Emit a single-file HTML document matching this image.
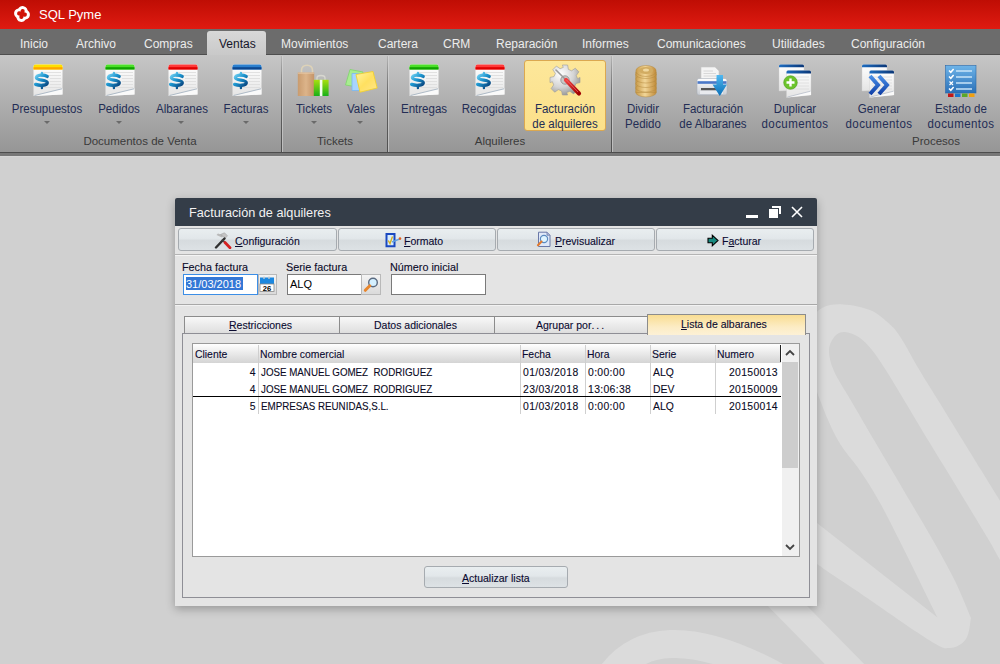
<!DOCTYPE html>
<html><head><meta charset="utf-8">
<style>
*{box-sizing:border-box}
html,body{margin:0;padding:0}
body{width:1000px;height:664px;position:relative;overflow:hidden;background:#d0d0d0;font-family:"Liberation Sans",sans-serif}
.a{position:absolute}
.t{position:absolute;white-space:pre;line-height:1}
#title{left:0;top:0;width:1000px;height:29px;background:linear-gradient(#bf0d04,#df1b11)}
#tabs{left:0;top:29px;width:1000px;height:26px;background:#6c6c6c;border-bottom:1px solid #4e4e4e}
.tab{font-size:12px;color:#ececec;top:38px}
#ribbon{left:0;top:55px;width:1000px;height:97px;background:linear-gradient(#c6c6c6,#969696)}
.rl{font-size:12px;color:#232d55;text-align:center;transform:scaleX(.96);transform-origin:50% 0}
.gl{font-size:11.5px;color:#3a3a3a;text-align:center}
.sep{width:2px;top:56px;height:96px;background:linear-gradient(90deg,transparent 0,transparent 0) ,linear-gradient(rgba(90,90,90,.15),rgba(90,90,90,.85) 40%,#505050);background-size:1px 100%;background-repeat:no-repeat;border-right:1px solid rgba(215,215,215,.6)}
.arr{width:0;height:0;border-left:3px solid transparent;border-right:3px solid transparent;border-top:3px solid #6a6a6a}
#dlg{left:175px;top:198px;width:642px;height:408px;background:#e4e4e4;box-shadow:0 3px 10px rgba(0,0,0,.28);border-radius:2px 2px 0 0}
.btn{position:absolute;height:23px;border:1px solid #a6abb0;border-radius:3px;background:linear-gradient(#e9eef0 0%,#e2e7ea 45%,#d6dbde 55%,#dde2e5 100%)}
.bt{font-size:10.5px;color:#0a0a30;-webkit-text-stroke:.1px #0a0a30}
.lbl{font-size:10.8px;color:#0a0a28;-webkit-text-stroke:.1px #0a0a28}
.inp{position:absolute;background:#fff;border:1px solid #7a7a7a}
.tb{position:absolute;height:17px;border:1px solid #8c8c8c;border-bottom:none;background:linear-gradient(#f8f8f8,#dedede)}
.gh{font-size:10.4px;color:#0a0a30;-webkit-text-stroke:.1px #0a0a30;top:350px}
.gc{font-size:10.4px;color:#0a0a24;-webkit-text-stroke:.1px #0a0a24}
.gd{letter-spacing:.35px}
.gn{transform:scaleX(.94);transform-origin:0 0}
.vl{position:absolute;width:1px;background:#cfcfcf}
</style></head><body>
<!-- watermark -->
<svg class="a" style="left:0;top:0" width="1000" height="664">
<path fill="#dbdbdb" d="M1031.5 552.0 C1023.1 538.3 992.5 488.7 981.0 470.0 C969.5 451.3 969.7 451.7 962.5 440.0 C955.3 428.3 945.1 411.7 937.9 400.0 C930.7 388.3 925.5 380.3 919.4 370.0 C913.2 359.7 906.1 345.7 901.0 338.0 C895.9 330.3 894.2 328.3 889.0 323.6 C883.8 318.9 877.7 313.2 870.0 310.0 C862.3 306.8 851.0 304.7 843.0 304.4 C835.0 304.1 827.5 304.6 822.0 308.0 C816.5 311.4 812.3 316.3 810.0 325.0 C807.7 333.7 806.3 347.5 808.0 360.0 C809.7 372.5 815.0 386.7 820.0 400.0 C825.0 413.3 831.2 428.3 837.8 440.0 C844.4 451.7 852.8 460.0 859.6 470.0 C866.4 480.0 871.8 488.3 878.4 500.0 C885.0 511.7 889.4 520.4 899.2 540.0 C909.1 559.6 931.1 604.7 937.5 617.6 L817.0 523.0 L770.0 486.0 L770.0 528.0 C777.8 534.0 802.8 553.7 817.0 564.0 C831.2 574.3 836.8 577.3 855.5 590.0 C874.2 602.7 913.2 630.3 929.0 640.0 C944.8 649.7 943.8 648.2 950.0 648.0 C956.2 647.8 962.5 644.0 966.0 639.0 C969.5 634.0 970.2 621.5 971.0 618.0 C968.3 611.8 961.4 594.0 955.0 581.0 C948.6 568.0 940.4 553.5 932.8 540.0 C925.2 526.5 916.1 511.7 909.3 500.0 C902.4 488.3 897.6 480.0 891.7 470.0 C885.8 460.0 880.9 451.7 874.0 440.0 C867.1 428.3 857.3 411.5 850.6 400.0 C843.9 388.5 837.6 379.3 834.0 371.0 C830.4 362.7 828.8 355.8 829.0 350.0 C829.2 344.2 832.4 339.0 835.0 336.0 C837.6 333.0 840.7 331.8 844.6 332.0 C848.5 332.2 854.0 334.0 858.6 337.0 C863.2 340.0 867.5 344.5 872.0 350.0 C876.5 355.5 880.5 361.7 885.8 370.0 C891.1 378.3 897.0 388.3 904.0 400.0 C911.0 411.7 920.9 428.3 928.0 440.0 C935.1 451.7 940.3 460.0 946.4 470.0 C952.5 480.0 957.5 488.3 964.6 500.0 C971.7 511.7 982.9 530.0 988.8 540.0 C994.7 550.0 996.5 554.0 1000.0 560.0 C1003.5 566.0 1008.3 573.3 1010.0 576.0 Z"/>
<g fill="none" stroke="#dbdbdb" stroke-width="28">
<path d="M600 694C628 634 690 620 810 696"/>
<path d="M760 578L870 690"/>
</g>
</svg>

<!-- title bar -->
<div id="title" class="a"></div>
<svg class="a" style="left:12px;top:4px" width="20" height="20" viewBox="-10 -10 20 20"><g transform="rotate(12)">
<g fill="#fff"><circle cx="0" cy="-3.1" r="4.9"/><circle cx="3.1" cy="0" r="4.9"/><circle cx="0" cy="3.1" r="4.9"/><circle cx="-3.1" cy="0" r="4.9"/></g>
<g fill="#d11408"><circle cx="0" cy="-2.9" r="2.1"/><circle cx="2.9" cy="0" r="2.1"/><circle cx="0" cy="2.9" r="2.1"/><circle cx="-2.9" cy="0" r="2.1"/><rect x="-2.2" y="-2.2" width="4.4" height="4.4"/></g></g></svg>
<div class="t" style="left:39px;top:8px;font-size:13px;color:#fff">SQL Pyme</div>

<!-- tab bar -->
<div id="tabs" class="a"></div>
<div class="a" style="left:207px;top:31px;width:59px;height:24px;background:linear-gradient(#d8d8d8,#c9c9c9);border-radius:3px 3px 0 0"></div>
<div class="t tab" style="left:20px">Inicio</div>
<div class="t tab" style="left:76px">Archivo</div>
<div class="t tab" style="left:144px">Compras</div>
<div class="t tab" style="left:219px;color:#15152a">Ventas</div>
<div class="t tab" style="left:281px">Movimientos</div>
<div class="t tab" style="left:378px">Cartera</div>
<div class="t tab" style="left:443px">CRM</div>
<div class="t tab" style="left:496px">Reparación</div>
<div class="t tab" style="left:582px">Informes</div>
<div class="t tab" style="left:657px">Comunicaciones</div>
<div class="t tab" style="left:772px">Utilidades</div>
<div class="t tab" style="left:851px">Configuración</div>

<!-- ribbon -->
<div id="ribbon" class="a"></div>
<div class="a" style="left:0;top:152px;width:1000px;height:1px;background:#4d4d4d"></div>
<div class="a" style="left:0;top:153px;width:1000px;height:3px;background:#777"></div>
<div class="a" style="left:0;top:156px;width:1000px;height:1px;background:#d6d6d6"></div>
<div class="a sep" style="left:281px"></div>
<div class="a sep" style="left:387px"></div>
<div class="a sep" style="left:611px"></div>

<div class="a" style="left:524px;top:60px;width:82px;height:71px;border:1px solid #dba850;border-radius:3px;background:linear-gradient(#fde79a,#fbe08a)"></div>
<div id="icons"></div>
<!-- tickets -->
<svg class="a" style="left:296px;top:64px" width="34" height="34" viewBox="0 0 34 34">
<defs><linearGradient id="bag" x1="0" x2="1"><stop offset="0" stop-color="#c99b6e"/><stop offset="0.5" stop-color="#dcb48a"/><stop offset="1" stop-color="#c49468"/></linearGradient>
<linearGradient id="gift" x1="0" y1="0" x2="0" y2="1"><stop offset="0" stop-color="#a8e010"/><stop offset="1" stop-color="#18b018"/></linearGradient></defs>
<path d="M5.5 9V6.5Q5.5 1.2 11 1.2 16.5 1.2 16.5 6.5V9" fill="none" stroke="#ddd2b8" stroke-width="1.6"/>
<path d="M1.8 8.5H18.2V32H1.8Z" fill="url(#bag)"/>
<path d="M1.8 8.5H18.2V10H1.8Z" fill="#e8caa6" opacity=".6"/>
<path d="M21 16V14Q21 11.5 25 11.5 29 11.5 29 14V16" fill="none" stroke="#d8d8d0" stroke-width="1.3"/>
<rect x="17.8" y="15.8" width="14.8" height="16.2" fill="url(#gift)"/>
<rect x="23.8" y="15.8" width="2.6" height="16.2" fill="#f4fff0"/>
</svg>
<!-- vales -->
<svg class="a" style="left:344px;top:68px" width="35" height="26" viewBox="0 0 35 26">
<defs><linearGradient id="yel" x1="0" y1="0" x2="1" y2="1"><stop offset="0" stop-color="#fff4a0"/><stop offset="0.5" stop-color="#ffe060"/><stop offset="1" stop-color="#ffe68a"/></linearGradient></defs>
<path d="M6 1.5L19 4 16.5 19.5 1.5 17Z" fill="#a8ec90" stroke="#7ed66a" stroke-width="0.8"/>
<path d="M8 5.5H20V22.5H8Z" fill="#a8d4ff" stroke="#7ab8f0" stroke-width="0.8"/>
<path d="M12 6.5L29 3.5 33.2 20 16 24.2Z" fill="url(#yel)" stroke="#f0d030" stroke-width="0.9"/>
</svg>
<!-- gear -->
<svg class="a" style="left:549px;top:64px" width="33" height="33" viewBox="0 0 33 33">
<defs><radialGradient id="gearg" cx=".35" cy=".3" r=".8"><stop offset="0" stop-color="#ffffff"/><stop offset=".55" stop-color="#d4d4d4"/><stop offset="1" stop-color="#8a8a8a"/></radialGradient>
<linearGradient id="redh" x1="0" y1="0" x2="1" y2="1"><stop offset="0" stop-color="#f04040"/><stop offset="1" stop-color="#a00000"/></linearGradient></defs>
<g transform="translate(16 16)">
<path fill="url(#gearg)" stroke="#9a9a9a" stroke-width=".6" d="M-2.6 -15H2.6L3.4 -10.6 6.6 -9.2 10.3 -11.8 13.9 -8.2 11.3 -4.5 12.6 -1.3 15 -2.6V2.6L11 3.4 9.6 6.6 12.2 10.3 8.6 13.9 4.9 11.3 1.7 12.6 2.6 15H-2.6L-3.4 11 -6.6 9.6 -10.3 12.2 -13.9 8.6 -11.3 4.9 -12.6 1.7 -15 2.6V-2.6L-11 -3.4 -9.6 -6.6 -12.2 -10.3 -8.6 -13.9 -4.9 -11.3 -1.7 -12.6Z"/>
<circle r="4.2" fill="#c8c8c8" stroke="#8a8a8a" stroke-width=".8"/>
</g>
<path d="M7 6L16.5 15.5" stroke="#9a9a9a" stroke-width="1.6" stroke-linecap="round"/>
<path d="M17 16L30 29.5" stroke="url(#redh)" stroke-width="4.2" stroke-linecap="round"/>
<path d="M17.5 16L29 28" stroke="#ff8080" stroke-width="1" opacity=".6"/>
</svg>
<!-- coins -->
<svg class="a" style="left:634px;top:64px" width="24" height="34" viewBox="0 0 24 34">
<defs><linearGradient id="coin" x1="0" x2="1"><stop offset="0" stop-color="#c89a48"/><stop offset=".45" stop-color="#f2d698"/><stop offset="1" stop-color="#c08a38"/></linearGradient></defs>
<g fill="url(#coin)" stroke="#b48a40" stroke-width=".5">
<ellipse cx="12" cy="28.5" rx="10.2" ry="4.4"/>
<rect x="1.8" y="8" width="20.4" height="20.5"/>
<ellipse cx="12" cy="24" rx="10.2" ry="4"/>
<ellipse cx="12" cy="19.5" rx="10.2" ry="4"/>
<ellipse cx="12" cy="15" rx="10.2" ry="4"/>
<ellipse cx="12" cy="10.5" rx="10.2" ry="4"/>
<ellipse cx="12" cy="7" rx="10.2" ry="5.5"/>
</g>
<ellipse cx="12" cy="6.5" rx="7" ry="3.6" fill="#d2ac62"/>
<ellipse cx="12" cy="6" rx="3" ry="1.6" fill="#f0d8a0"/>
</svg>
<!-- printer -->
<svg class="a" style="left:696px;top:65px" width="32" height="33" viewBox="0 0 32 33">
<defs><linearGradient id="prn" x1="0" y1="0" x2="0" y2="1"><stop offset="0" stop-color="#ffffff"/><stop offset="1" stop-color="#c8ccd2"/></linearGradient>
<linearGradient id="arrb" x1="0" y1="0" x2="0" y2="1"><stop offset="0" stop-color="#50b8f0"/><stop offset="1" stop-color="#0a70b8"/></linearGradient></defs>
<path d="M5 2H19L23 6V15H5Z" fill="#f4f4f4" stroke="#c8c8c8" stroke-width=".6"/>
<g stroke="#d0d0d0" stroke-width=".8"><path d="M7.5 6H17M7.5 8.5H20M7.5 11H20"/></g>
<path d="M1 15.5Q1 13.5 3 13.5H29Q31 13.5 31 15.5V28Q31 30 29 30H3Q1 30 1 28Z" fill="url(#prn)" stroke="#a8aeb8" stroke-width=".6"/>
<rect x="1.5" y="16.2" width="29" height="2.6" fill="#4a78c8"/>
<rect x="5" y="23" width="21" height="2.2" fill="#555"/>
<rect x="4" y="26" width="23" height="3" fill="#e8eaee"/>
<path d="M20.5 10H27V19.5H31L23.8 31 16.5 19.5H20.5Z" fill="url(#arrb)"/>
</svg>
<!-- duplicar / generar -->
<svg class="a" style="left:0;top:0" width="0" height="0"><defs>
<symbol id="doc2" viewBox="0 0 34 34">
<path d="M1 2Q1 .5 2.5 .5H24.5Q26 .5 26 2V26L1 27Z" fill="url(#paper)" stroke="#cfcfcf" stroke-width=".4"/>
<path d="M1 3.2V2Q1 .5 2.5 .5H24.5Q26 .5 26 2V3.2Z" fill="url(#blueBar)"/>
<path d="M8.5 8Q8.5 6.5 10 6.5H31.5Q33 6.5 33 8V31L8.5 33.5Z" fill="url(#paper)" stroke="#cfcfcf" stroke-width=".4"/>
<path d="M8.5 9.6V8Q8.5 6.5 10 6.5H31.5Q33 6.5 33 8V9.6Z" fill="url(#blueBar)"/>
<g stroke="#dcdcdc" stroke-width=".8"><path d="M11 13H31M11 16H31M11 19H31M11 22H31M11 25H31"/></g>
<path d="M8.5 33.5L33 27V31Z" fill="#fafafa"/>
<path d="M9.5 33L32.5 27.2" stroke="#b0b8c4" stroke-width=".7"/>
</symbol></defs></svg>
<svg class="a" style="left:778px;top:64px" width="34" height="34"><use href="#doc2"/>
<circle cx="12.5" cy="18.5" r="6.8" fill="#6cc42c" stroke="#4a9a18" stroke-width=".6"/>
<path d="M12.5 14.5V22.5M8.5 18.5H16.5" stroke="#fff" stroke-width="2.4"/>
</svg>
<svg class="a" style="left:861px;top:64px" width="34" height="34"><use href="#doc2"/>
<defs><linearGradient id="chev" x1="0" y1="0" x2="0" y2="1"><stop offset="0" stop-color="#4a90e8"/><stop offset="1" stop-color="#1040a8"/></linearGradient></defs>
<path d="M9 12L17 21 9 30M18 12L26 21 18 30" fill="none" stroke="url(#chev)" stroke-width="4" stroke-linejoin="miter"/>
</svg>
<!-- estado -->
<svg class="a" style="left:945px;top:65px" width="32" height="33" viewBox="0 0 32 33">
<defs><linearGradient id="est" x1="0" y1="0" x2="0" y2="1"><stop offset="0" stop-color="#6eb4e8"/><stop offset="1" stop-color="#2a70b8"/></linearGradient></defs>
<rect x=".5" y=".5" width="30.5" height="27.5" fill="url(#est)" stroke="#2a68a8" stroke-width=".6"/>
<g fill="none" stroke="#fff" stroke-width="1.5"><path d="M4 5.5L5.8 7.3 8.6 4M4 11.5L5.8 13.3 8.6 10M4 23.5L5.8 25.3 8.6 22"/><path d="M4.5 16.5L8 20M8 16.5L4.5 20" stroke-width="1.2"/></g>
<g stroke="#c8e4f8" stroke-width="1.3"><path d="M11 6H27M11 12H27M11 18H27M11 24H27"/></g>
<rect x="3" y="28.5" width="5.5" height="3.5" fill="#c01818"/>
<rect x="10" y="28.5" width="5.5" height="3.5" fill="#1a78d0"/>
<rect x="17" y="28.5" width="5.5" height="3.5" fill="#5aa828"/>
<rect x="24" y="28.5" width="5.5" height="3.5" fill="#f0a010"/>
</svg>

<svg class="a" style="left:0;top:0" width="0" height="0">
<defs>
<linearGradient id="dollar" gradientUnits="userSpaceOnUse" x1="2" y1="9" x2="15" y2="22"><stop offset="0" stop-color="#7fd8f5"/><stop offset="0.45" stop-color="#1c95cf"/><stop offset="1" stop-color="#063a74"/></linearGradient>
<linearGradient id="paper" x1="0" y1="0" x2="0" y2="1"><stop offset="0" stop-color="#ffffff"/><stop offset="1" stop-color="#e4e4e4"/></linearGradient>
<linearGradient id="shade" x1="0" y1="0" x2="0" y2="1"><stop offset="0" stop-color="#fff" stop-opacity=".35"/><stop offset="1" stop-color="#000" stop-opacity=".12"/></linearGradient>
<linearGradient id="blueBar" x1="0" y1="0" x2="1" y2="0"><stop offset="0" stop-color="#1d6cc0"/><stop offset="1" stop-color="#0b3777"/></linearGradient>
<symbol id="doc" viewBox="0 0 30 32">
<path d="M0.5 2.5Q0.5 0.5 2.5 0.5H27.5Q29.5 0.5 29.5 2.5V30.5L0.5 32Z" fill="url(#paper)"/>
<path d="M0.5 5.5V2.5Q0.5 0.5 2.5 0.5H27.5Q29.5 0.5 29.5 2.5V5.5Z" fill="var(--c1)"/>
<path d="M0.5 5.5V3.2H29.5V5.5Z" fill="var(--c2)"/>
<g stroke="#dedede" stroke-width="0.9"><path d="M9 8.5H28M15 11.5H28M17 14.5H28M17 17.5H28M17 20.5H28M9 23.5H28"/></g>
<g stroke="url(#dollar)" fill="none" stroke-linecap="round" transform="translate(0 .8)"><path d="M14.2 11.6C11 9.6 3.6 9.6 3.4 12.9 3.2 16.2 14.6 14.6 14.3 18 14 21 6.5 21 2.6 19.6" stroke-width="3.3"/><path d="M8.9 8.2V10.6M8.9 21V23.4" stroke-width="2.3"/></g>
<path d="M0.5 32L29.5 24.5V30.5Z" fill="#fafafa"/>
<path d="M1.5 31.5L29 24.8" stroke="#a7b4c2" stroke-width="0.9"/>
</symbol>
</defs>
</svg>
<svg class="a" style="left:33px;top:64px;--c1:#ffe000;--c2:#ffa600" width="30" height="32"><use href="#doc"/></svg>
<svg class="a" style="left:105px;top:64px;--c1:#4be028;--c2:#10a300" width="30" height="32"><use href="#doc"/></svg>
<svg class="a" style="left:168px;top:64px;--c1:#ff3a3a;--c2:#e00000" width="30" height="32"><use href="#doc"/></svg>
<svg class="a" style="left:232px;top:64px;--c1:#2b80cf;--c2:#0c4790" width="30" height="32"><use href="#doc"/></svg>
<svg class="a" style="left:409px;top:64px;--c1:#4be028;--c2:#10a300" width="30" height="32"><use href="#doc"/></svg>
<svg class="a" style="left:475px;top:64px;--c1:#ff3a3a;--c2:#e00000" width="30" height="32"><use href="#doc"/></svg>


<div class="t rl" style="left:0;width:94px;top:103px">Presupuestos</div>
<div class="t rl" style="left:79px;width:80px;top:103px">Pedidos</div>
<div class="t rl" style="left:142px;width:80px;top:103px">Albaranes</div>
<div class="t rl" style="left:206px;width:80px;top:103px">Facturas</div>
<div class="t rl" style="left:274px;width:80px;top:103px">Tickets</div>
<div class="t rl" style="left:321px;width:80px;top:103px">Vales</div>
<div class="t rl" style="left:384px;width:80px;top:103px">Entregas</div>
<div class="t rl" style="left:449px;width:80px;top:103px">Recogidas</div>
<div class="t rl" style="left:525px;width:80px;top:102px;line-height:15px">Facturación
de alquileres</div>
<div class="t rl" style="left:603px;width:80px;top:102px;line-height:15px">Dividir
Pedido</div>
<div class="t rl" style="left:668px;width:90px;top:102px;line-height:15px">Facturación
de Albaranes</div>
<div class="t rl" style="left:750px;width:90px;top:102px;line-height:15px">Duplicar
<span style="letter-spacing:.45px">documentos</span></div>
<div class="t rl" style="left:834px;width:90px;top:102px;line-height:15px">Generar
<span style="letter-spacing:.45px">documentos</span></div>
<div class="t rl" style="left:916px;width:90px;top:102px;line-height:15px">Estado de
<span style="letter-spacing:.45px">documentos</span></div>

<div class="a arr" style="left:44px;top:121px"></div>
<div class="a arr" style="left:116px;top:121px"></div>
<div class="a arr" style="left:178px;top:121px"></div>
<div class="a arr" style="left:243px;top:121px"></div>
<div class="a arr" style="left:311px;top:121px"></div>
<div class="a arr" style="left:357px;top:121px"></div>

<div class="t gl" style="left:40px;width:200px;top:136px">Documentos de Venta</div>
<div class="t gl" style="left:284px;width:102px;top:136px">Tickets</div>
<div class="t gl" style="left:389px;width:222px;top:136px">Alquileres</div>
<div class="t gl" style="left:886px;width:100px;top:136px">Procesos</div>

<!-- dialog -->
<div id="dlg" class="a"></div>
<div class="a" style="left:175px;top:198px;width:642px;height:28px;background:#343d48;border-radius:2px 2px 0 0"></div>
<div class="t" style="left:189px;top:207px;font-size:12.7px;color:#f2f2f2">Facturación de alquileres</div>
<div class="a" style="left:746px;top:215px;width:12px;height:3px;background:#fff"></div>
<svg class="a" style="left:769px;top:206px" width="13" height="12"><path d="M3 0h9v8h-2V2H3z M0 3h9v9H0z" fill="#fff"/></svg>
<svg class="a" style="left:791px;top:206px" width="12" height="12"><path d="M1 1l10 10M11 1L1 11" stroke="#fff" stroke-width="1.6"/></svg>

<div class="btn" style="left:178px;top:228px;width:159px"></div>
<div class="btn" style="left:338px;top:228px;width:158px"></div>
<div class="btn" style="left:497px;top:228px;width:158px"></div>
<div class="btn" style="left:656px;top:228px;width:158px"></div>
<div class="a" style="left:175px;top:254px;width:642px;height:1px;background:#b4b4b4"></div>
<div class="a" style="left:175px;top:255px;width:642px;height:1px;background:#f4f4f4"></div>

<div class="t bt" style="left:235px;top:236px"><u>C</u>onfiguración</div>
<div class="t bt" style="left:404px;top:236px"><u>F</u>ormato</div>
<div class="t bt" style="left:555px;top:236px"><u>P</u>revisualizar</div>
<div class="t bt" style="left:722px;top:236px">F<u>a</u>cturar</div>

<div class="t lbl" style="left:182px;top:262px">Fecha factura</div>
<!-- dialog toolbar icons -->
<svg class="a" style="left:214px;top:232px" width="18" height="17" viewBox="0 0 18 17">
<path d="M9.5 3.5L4 1.5 2.5 3 8 5.5Z" fill="#b8b8b8"/>
<path d="M6.5 2.5L10.5 0.8 13.5 3.8 11.5 6Z" fill="#c4c4c4" stroke="#9a9a9a" stroke-width=".5"/>
<path d="M2 15.5L10.5 6.5" stroke="#303030" stroke-width="2.4" stroke-linecap="round"/>
<path d="M8 7.5L12 11.5" stroke="#404040" stroke-width="1.6"/>
<path d="M11 10.5L16 15.8" stroke="#d42020" stroke-width="2.8" stroke-linecap="round"/>
</svg>
<svg class="a" style="left:384px;top:232px" width="18" height="16" viewBox="0 0 18 16">
<path d="M2.5 2H10.5V14.2H2.5Z" fill="#d8ecfc" stroke="#1a48c0" stroke-width="2"/>
<path d="M4.2 8.5L6 11.5 8.5 4.5" fill="none" stroke="#d4b020" stroke-width="1.4"/>
<path d="M8 10L16 6.8" stroke="#60a0e0" stroke-width="1.4"/>
<circle cx="16" cy="6.6" r="1.3" fill="#e06020"/>
</svg>
<svg class="a" style="left:536px;top:231px" width="16" height="17" viewBox="0 0 16 17">
<path d="M2.5 1.2H11L14 4.2V15.5H2.5Z" fill="#dfe8f8" stroke="#6a78a8" stroke-width="1"/>
<path d="M11 1.2V4.2H14" fill="#b0c0e0" stroke="#6a78a8" stroke-width=".8"/>
<circle cx="8" cy="8" r="3.6" fill="#dff4ff" stroke="#5a8ac0" stroke-width="1.2"/>
<path d="M5.5 10.6L2 14.2" stroke="#e07a30" stroke-width="2.2" stroke-linecap="round"/>
</svg>
<svg class="a" style="left:707px;top:234px" width="12" height="13" viewBox="0 0 12 13">
<path d="M1 4.2H5.3V1.2L11 6.5 5.3 11.8V8.8H1Z" fill="#178a80" stroke="#000" stroke-width="1.1" stroke-linejoin="miter"/>
</svg>

<div class="t lbl" style="left:286px;top:262px">Serie factura</div>
<div class="t lbl" style="left:390px;top:262px">Número inicial</div>
<div class="inp" style="left:183px;top:274px;width:75px;height:21px;border-color:#3c8ee6"></div>
<div class="a" style="left:186px;top:277px;width:57px;height:13px;background:#3377d6"></div>
<div class="t" style="left:186px;top:279px;font-size:11px;color:#fff">31/03/2018</div>
<div class="a" style="left:258px;top:274px;width:19px;height:21px;border:1px solid #b9b9b9;background:linear-gradient(#f4f4f4,#dadada)"></div>
<div class="inp" style="left:287px;top:274px;width:75px;height:21px"></div>
<div class="t" style="left:290px;top:279px;font-size:11px;color:#000">ALQ</div>
<div class="a" style="left:361px;top:274px;width:20px;height:21px;border:1px solid #b9b9b9;background:linear-gradient(#f4f4f4,#dadada)"></div>
<div class="inp" style="left:391px;top:274px;width:95px;height:21px"></div>
<!-- calendar -->
<svg class="a" style="left:259px;top:276px" width="16" height="17" viewBox="0 0 16 17">
<rect x="1" y="1.5" width="14" height="6.5" fill="#1c88e0"/>
<rect x="1" y="8" width="14" height="7.5" fill="#fff" stroke="#888" stroke-width=".8"/>
<path d="M5 0.5V3M10 0.5V3" stroke="#ccc" stroke-width="1.3"/>
<text x="8" y="14.6" text-anchor="middle" font-family="Liberation Sans" font-weight="bold" font-size="7.6" fill="#000">26</text>
</svg>
<!-- magnifier -->
<svg class="a" style="left:362px;top:275px" width="18" height="19" viewBox="0 0 18 19">
<circle cx="11" cy="7.5" r="4.3" fill="#d4f0ff" stroke="#5a6a80" stroke-width="1.4"/>
<path d="M7.8 10.8L3.3 15.3" stroke="#e8862c" stroke-width="3" stroke-linecap="round"/>
</svg>
<div class="a" style="left:175px;top:304px;width:642px;height:1px;background:#a8a8a8"></div>
<div class="a" style="left:175px;top:305px;width:642px;height:1px;background:#f2f2f2"></div>

<!-- tabs -->
<div class="a" style="left:182px;top:333px;width:628px;height:265px;border:1px solid #8e8e95"></div>
<div class="tb" style="left:184px;top:316px;width:156px"></div>
<div class="tb" style="left:339px;top:316px;width:156px"></div>
<div class="tb" style="left:494px;top:316px;width:154px"></div>
<div class="a" style="left:647px;top:314px;width:159px;height:21px;border:1px solid #8c8c8c;border-bottom:none;background:linear-gradient(#f9dd92,#fcecc4 60%,#fdf1d6)"></div>
<div class="t bt" style="left:229px;top:320px"><u>R</u>estricciones</div>
<div class="t bt" style="left:374px;top:320px">Datos adicionales</div>
<div class="t bt" style="left:536px;top:320px">Agrupar por<span style="letter-spacing:2px">...</span></div>
<div class="t bt" style="left:681px;top:319px"><u>L</u>ista de albaranes</div>

<!-- grid -->
<div class="a" style="left:192px;top:343px;width:608px;height:214px;background:#fff;border:1px solid #9a9a9a"></div>
<div class="a" style="left:193px;top:344px;width:588px;height:19px;background:linear-gradient(#ffffff,#d4d4d4)"></div>
<div class="a" style="left:780px;top:345px;width:1px;height:17px;background:#222"></div>
<div class="a" style="left:782px;top:344px;width:17px;height:212px;background:#f0f0f0"></div>
<div class="a" style="left:782px;top:362px;width:16px;height:106px;background:#cdcdcd"></div>
<svg class="a" style="left:785px;top:349px" width="10" height="8"><path d="M1 6l4-4 4 4" fill="none" stroke="#444" stroke-width="1.8"/></svg>
<svg class="a" style="left:785px;top:543px" width="10" height="8"><path d="M1 2l4 4 4-4" fill="none" stroke="#444" stroke-width="1.8"/></svg>
<div class="vl" style="left:258px;top:345px;height:69px"></div>
<div class="vl" style="left:520px;top:345px;height:69px"></div>
<div class="vl" style="left:585px;top:345px;height:69px"></div>
<div class="vl" style="left:650px;top:345px;height:69px"></div>
<div class="vl" style="left:715px;top:345px;height:69px"></div>
<div class="t gh" style="left:195px">Cliente</div>
<div class="t gh" style="left:260px">Nombre comercial</div>
<div class="t gh" style="left:522px">Fecha</div>
<div class="t gh" style="left:587px">Hora</div>
<div class="t gh" style="left:652px">Serie</div>
<div class="t gh" style="left:717px">Numero</div>
<div class="a" style="left:193px;top:396px;width:588px;height:1px;background:#000"></div>

<div class="t gc gd" style="left:200px;width:56px;text-align:right;top:368px">4</div>
<div class="t gc gn" style="left:261px;top:368px">JOSE MANUEL GOMEZ  RODRIGUEZ</div>
<div class="t gc gd" style="left:523px;top:368px">01/03/2018</div>
<div class="t gc gd" style="left:588px;top:368px">0:00:00</div>
<div class="t gc" style="left:653px;top:368px">ALQ</div>
<div class="t gc gd" style="left:690px;width:88px;text-align:right;top:368px">20150013</div>
<div class="t gc gd" style="left:200px;width:56px;text-align:right;top:385px">4</div>
<div class="t gc gn" style="left:261px;top:385px">JOSE MANUEL GOMEZ  RODRIGUEZ</div>
<div class="t gc gd" style="left:523px;top:385px">23/03/2018</div>
<div class="t gc gd" style="left:588px;top:385px">13:06:38</div>
<div class="t gc" style="left:653px;top:385px">DEV</div>
<div class="t gc gd" style="left:690px;width:88px;text-align:right;top:385px">20150009</div>
<div class="t gc gd" style="left:200px;width:56px;text-align:right;top:402px">5</div>
<div class="t gc gn" style="left:261px;top:402px">EMPRESAS REUNIDAS,S.L.</div>
<div class="t gc gd" style="left:523px;top:402px">01/03/2018</div>
<div class="t gc gd" style="left:588px;top:402px">0:00:00</div>
<div class="t gc" style="left:653px;top:402px">ALQ</div>
<div class="t gc gd" style="left:690px;width:88px;text-align:right;top:402px">20150014</div>

<div class="btn" style="left:424px;top:566px;width:144px;height:22px"></div>
<div class="t bt" style="left:462px;top:573px"><u>A</u>ctualizar lista</div>

</body></html>
